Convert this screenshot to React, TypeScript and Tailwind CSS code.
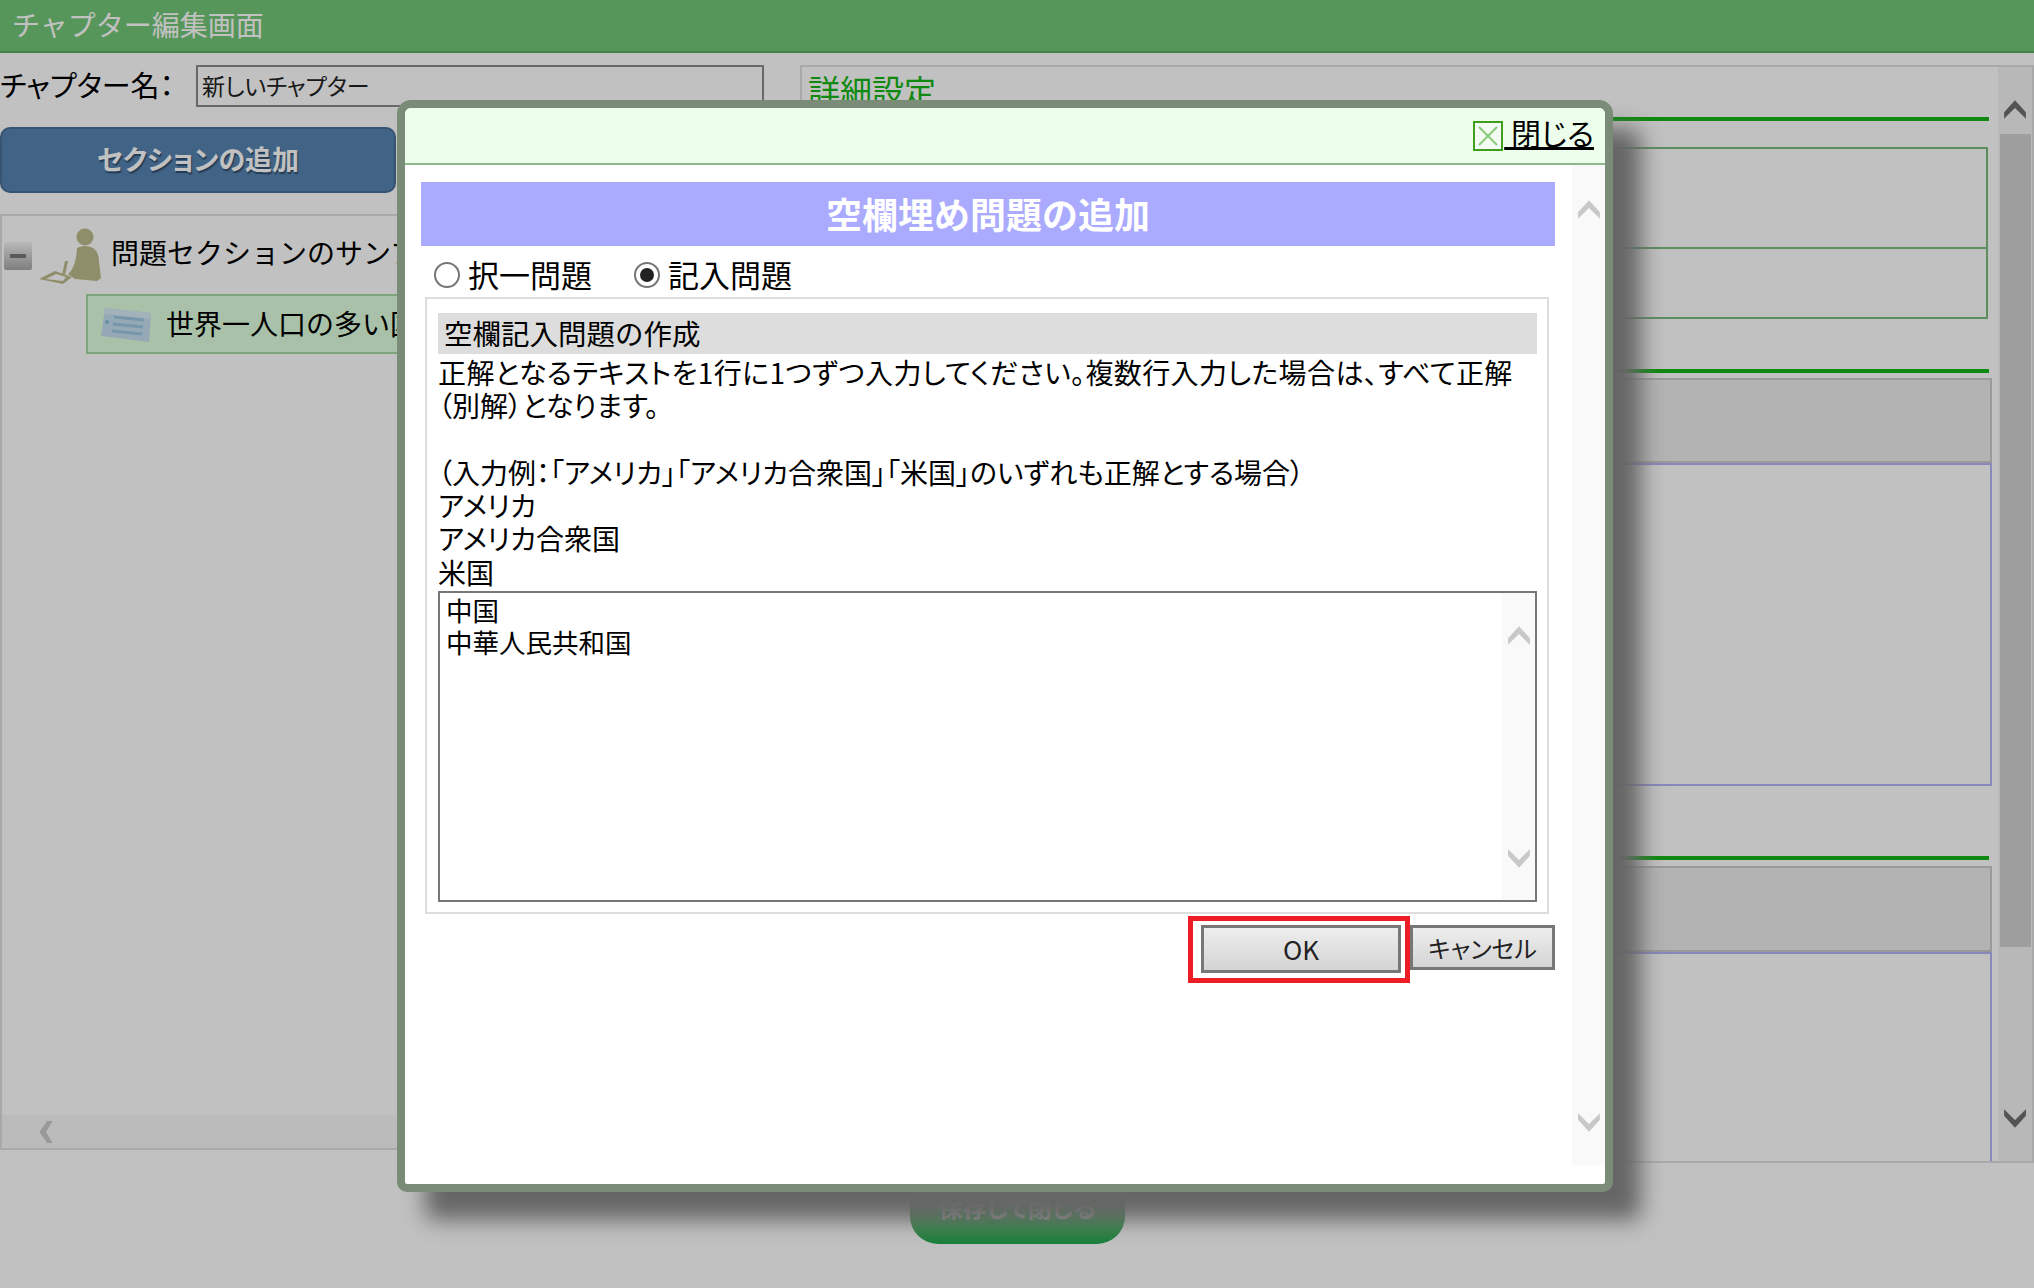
import React from 'react';

const Chevron = ({ dir, className }: { dir: 'up' | 'down' | 'left'; className?: string }) => {
  const d =
    dir === 'up'
      ? 'M1 14 L11 3 L21 14 L21 20 L11 10 L1 20 Z'
      : dir === 'down'
      ? 'M1 2 L11 12 L21 2 L21 8 L11 19 L1 8 Z'
      : 'M13 1 L7 11 L13 21 L8 21 L1 11 L8 1 Z';
  return (
    <svg viewBox={dir === 'left' ? '0 0 14 22' : '0 0 22 22'} className={className} fill="currentColor">
      <path d={d} />
    </svg>
  );
};

const PersonIcon = () => (
  <svg viewBox="0 0 62 56" className="w-[62px] h-[56px] shrink-0" fill="#bcbc8c">
    <circle cx="46" cy="9" r="8.5" />
    <path d="M38 20 Q46 16 54 20 Q60 24 60 34 L62 50 L58 53 L36 51 L29 46 Q37 40 38 20 Z" />
    <path d="M26 33 L29 33 L26 47 L23 47 Z" />
    <path d="M0 51 L16 43 L33 49 L24 56 Z M7 51 L24 53 L27 49 L17 46 Z" fillRule="evenodd" />
  </svg>
);

const CardIcon = () => (
  <svg viewBox="0 0 52 36" className="w-[52px] h-[36px] shrink-0">
    <path d="M5 2 L51 7 L49 36 L1 30 Z" fill="#c4e0f0" />
    <path d="M5 2 L51 7 L50 13 L4 8 Z" fill="#d8ecf6" />
    <path d="M14 11 L44 14 M13 18 L43 21 M12 25 L42 28" stroke="#9cc8e0" strokeWidth="3" />
    <circle cx="7" cy="16" r="2" fill="#8abcd8" />
  </svg>
);

const CloseIcon = () => (
  <svg viewBox="0 0 30 30" className="w-[30px] h-[30px] shrink-0 mr-[1px]">
    <rect x="1" y="1" width="28" height="28" fill="#f4fbf2" stroke="#3f9d1f" strokeWidth="2" />
    <path d="M6 6 L24 24 M24 6 L6 24" stroke="#86cc78" strokeWidth="2" />
  </svg>
);

const RadioDot = ({ checked }: { checked?: boolean }) => (
  <span className="w-[26px] h-[26px] rounded-full border-2 border-[#767676] bg-white flex items-center justify-center shrink-0">
    {checked && <span className="w-[14px] h-[14px] rounded-full bg-[#222]" />}
  </span>
);

const BackgroundPage = () => (
  <div className="h-full flex flex-col bg-white">
    <div className="h-[53px] shrink-0 bg-[#73c677] border-b-2 border-[#5fa863] pl-[12px] pb-[3px] flex items-center text-[28px] text-white">
      チャプター編集画面
    </div>
    <div className="flex items-start mt-[12px]">
      <div className="w-[800px] shrink-0 pr-[10px]">
        <div className="flex items-center h-[41px]">
          <span className="text-[29px] w-[196px] shrink-0 whitespace-nowrap text-black pb-[2px] [font-feature-settings:'palt']">チャプター名：</span>
          <div className="w-[568px] h-[42px] border-2 border-[#8a8a8a] pl-[4px] flex items-center text-[23px] [font-feature-settings:'palt'] text-[#222]">
            新しいチャプター
          </div>
        </div>
        <button className="mt-[21px] w-[396px] h-[66px] pb-[1px] rounded-[10px] bg-[#5783b0] border-2 border-[#4a7098] text-white text-[27px] font-bold [font-feature-settings:'palt'] [text-shadow:1px_2px_1px_#2f4f70]">
          セクションの追加
        </button>
        <div className="mt-[21px] h-[936px] border-2 border-[#e0e0e0] flex flex-col">
          <div className="flex-1 pt-[12px]">
            <div className="flex items-center">
              <span className="ml-[2px] w-[28px] h-[28px] rounded-[2px] bg-gradient-to-b from-[#f4f4f4] to-[#a8a8a8] flex items-center justify-center shrink-0">
                <span className="w-[16px] h-[4px] bg-[#777]" />
              </span>
              <span className="ml-[7px]"><PersonIcon /></span>
              <span className="ml-[10px] pb-[9px] text-[28px] text-black whitespace-nowrap">問題セクションのサンプル</span>
            </div>
            <div className="mt-[10px] ml-[84px] h-[60px] bg-[#dfffdf] border-2 border-[#a6daa6] flex items-center pl-[12px]">
              <CardIcon />
              <span className="ml-[14px] pb-[3px] text-[28px] text-black whitespace-nowrap">世界一人口の多い国</span>
            </div>
          </div>
          <div className="h-[33px] bg-[#f7f7f7] flex items-center pl-[36px] text-[#cacaca]">
            <Chevron dir="left" className="w-[16px] h-[24px]" />
          </div>
        </div>
      </div>
      <div className="flex-1 h-[1098px] border-2 border-[#e0e0e0] flex">
        <div className="flex-1 pl-[6px] overflow-hidden">
          <div className="text-[#14b615] text-[32px] leading-[40px] pt-[2px]">詳細設定</div>
          <div className="h-[4px] mt-[8px] mr-[9px] bg-[#14b615]" />
          <div className="mt-[26px] mr-[10px] h-[172px] border-2 border-[#7abc7f] flex flex-col">
            <div className="h-[100px] border-b-2 border-[#7abc7f]" />
          </div>
          <div className="h-[4px] mt-[50px] mr-[9px] bg-[#14b615]" />
          <div className="mt-[5px] mr-[6px] h-[85px] bg-[#ededed] border-2 border-[#cacaca]" />
          <div className="mr-[6px] h-[323px] border-2 border-[#b4b4f7]" />
          <div className="h-[4px] mt-[70px] mr-[9px] bg-[#14b615]" />
          <div className="mt-[6px] mr-[6px] h-[86px] bg-[#ededed] border-2 border-[#cacaca]" />
          <div className="mr-[6px] h-[400px] border-2 border-[#b4b4f7]" />
        </div>
        <div className="w-[34px] shrink-0 bg-[#f3f3f3] flex flex-col items-center relative">
          <Chevron dir="up" className="w-[24px] h-[24px] mt-[30px] text-[#707070] shrink-0" />
          <div className="mt-[13px] w-[31px] h-[813px] bg-[#d1d1d1] shrink-0" />
          <Chevron dir="down" className="w-[24px] h-[24px] mt-[160px] text-[#707070] shrink-0" />
        </div>
      </div>
    </div>
    <div className="mt-[13px] flex justify-center">
      <button className="w-[215px] h-[68px] pb-[6px] rounded-[28px] bg-gradient-to-b from-[#8fb896] to-[#1fa94f] text-[#c8c8c8] text-[24px] font-bold [font-feature-settings:'palt']">
        保存して閉じる
      </button>
    </div>
  </div>
);

const Dialog = () => (
  <div className="absolute left-[397px] top-[100px] w-[1216px] h-[1092px] border-[8px] border-[#7a8c78] rounded-t-[14px] rounded-b-[10px] bg-white shadow-[28px_28px_22px_#666] flex flex-col text-black">
    <div className="h-[57px] shrink-0 bg-[#edffec] rounded-t-[6px] border-b-2 border-[#90b890] flex items-center justify-end pr-[11px]">
      <CloseIcon />
      <span className="text-[30px] pb-[8px] underline whitespace-pre leading-[34px] [font-feature-settings:'palt']"> 閉じる</span>
    </div>
    <div className="flex h-[1000px] shrink-0">
      <div className="flex-1 min-w-0 pl-[16px] pr-[17px] pt-[17px]">
        <div className="h-[64px] pb-[3px] bg-[#aaaaff] flex items-center justify-center text-white text-[36px] font-bold">
          空欄埋め問題の追加
        </div>
        <div className="h-[51px] flex items-center pt-[6px] pl-[13px] text-[31px]">
          <RadioDot />
          <span className="ml-[8px] w-[166px]">択一問題</span>
          <RadioDot checked />
          <span className="ml-[8px]">記入問題</span>
        </div>
        <div className="ml-[4px] mr-[6px] h-[617px] border-2 border-[#dddddd] pt-[14px] pl-[11px] pr-[10px]">
          <div className="h-[41px] bg-[#dddddd] pl-[6px] flex items-center text-[28.5px]">空欄記入問題の作成</div>
          <div className="mt-[2px] text-[28px] leading-[33.3px] whitespace-nowrap [font-feature-settings:'palt']">
            <span className="tracking-[0.4px]">正解となるテキストを1行に1つずつ入力してください。複数行入力した場合は、すべて正解</span>
            <br />
            （別解）となります。
            <br />
            <br />
            （入力例：「アメリカ」「アメリカ合衆国」「米国」のいずれも正解とする場合）
            <br />
            アメリカ
            <br />
            アメリカ合衆国
            <br />
            米国
          </div>
          <div className="mt-[2px] h-[311px] border-2 border-[#777777] flex">
            <div className="flex-1 pl-[6px] pt-[1px] text-[26.5px] leading-[32px] [font-feature-settings:'palt']">
              中国
              <br />
              中華人民共和国
            </div>
            <div className="w-[33px] shrink-0 bg-[#f9f9f9] flex flex-col items-center justify-between pt-[30px] pb-[29px] text-[#c8c8c8]">
              <Chevron dir="up" className="w-[24px] h-[24px]" />
              <Chevron dir="down" className="w-[24px] h-[24px]" />
            </div>
          </div>
        </div>
        <div className="flex justify-end items-start mt-[2px]">
          <div className="w-[222px] h-[67px] border-[5px] border-[#ee1c25] flex items-start justify-end pr-[4px] pt-[4px]">
            <button className="w-[200px] h-[48px] pb-[2px] border-[3px] border-[#777777] bg-gradient-to-b from-[#eeeeee] to-[#d4d4d4] text-[26px] text-[#222]">
              OK
            </button>
          </div>
          <button className="mt-[9px] w-[145px] h-[45px] border-[3px] border-[#777777] bg-gradient-to-b from-[#eeeeee] to-[#d4d4d4] text-[24px] text-[#222] [font-feature-settings:'palt']">
            キャンセル
          </button>
        </div>
      </div>
      <div className="w-[33px] shrink-0 bg-[#f9f9f9] flex flex-col items-center justify-between pt-[32px] pb-[30px] text-[#c8c8c8]">
        <Chevron dir="up" className="w-[24px] h-[24px]" />
        <Chevron dir="down" className="w-[24px] h-[24px]" />
      </div>
    </div>
  </div>
);

export default function App() {
  return (
    <div className="relative w-[2034px] h-[1288px] overflow-hidden font-['Noto_Sans_CJK_JP',sans-serif]">
      <BackgroundPage />
      <div className="absolute inset-0 bg-black/[0.243]" />
      <Dialog />
    </div>
  );
}
